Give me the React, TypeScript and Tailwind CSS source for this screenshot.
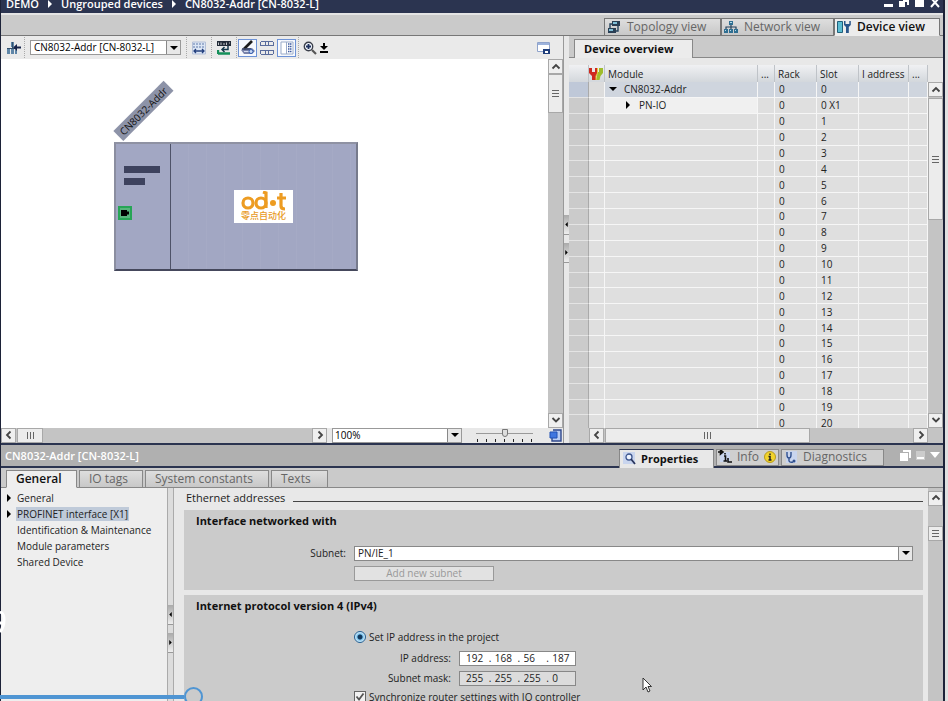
import React from "react";

const viewTabs = [
  { id: "topology", label: "Topology view", width: "w-[117px]", active: false },
  { id: "network", label: "Network view", width: "w-[113px]", active: false },
  { id: "device", label: "Device view", width: "w-[106px]", active: true },
];

const inspectorTabs = [
  { label: "General", width: "w-[71px]", active: true },
  { label: "IO tags", width: "w-[64px]", active: false },
  { label: "System constants", width: "w-[124px]", active: false },
  { label: "Texts", width: "w-[57px]", active: false },
];

const treeItems = [
  { label: "General", expandable: true, selected: false },
  { label: "PROFINET interface [X1]", expandable: true, selected: true },
  { label: "Identification & Maintenance", expandable: false, selected: false },
  { label: "Module parameters", expandable: false, selected: false },
  { label: "Shared Device", expandable: false, selected: false },
];

const modules = [
  { name: "CN8032-Addr", level: 0, rack: "0", slot: "0" },
  { name: "PN-IO", level: 1, rack: "0", slot: "0 X1" },
  ...Array.from({ length: 20 }, (_, i) => ({
    name: "",
    level: 2,
    rack: "0",
    slot: String(i + 1),
  })),
];

function Arrow({ dir, className = "" }: { dir: "up" | "down" | "left" | "right"; className?: string }) {
  const d = {
    up: "M1.5 6.5 5 3l3.5 3.5",
    down: "M1.5 3 5 6.5 8.5 3",
    left: "M6.5 1.5 3 5l3.5 3.5",
    right: "M3.5 1.5 7 5 3.5 8.5",
  }[dir];
  return (
    <svg viewBox="0 0 10 10" className={`h-[10px] w-[10px] ${className}`} fill="none" stroke="#444" strokeWidth="1.8">
      <path d={d} />
    </svg>
  );
}

function Triangle({ dir, className = "" }: { dir: "down" | "right" | "left"; className?: string }) {
  const d = { down: "M0 2h8L4 6z", right: "M2 0v8l4-4z", left: "M6 0v8L2 4z" }[dir];
  return (
    <svg viewBox="0 0 8 8" className={`h-2 w-2 shrink-0 ${className}`} fill="currentColor">
      <path d={d} />
    </svg>
  );
}

function ScrollButton({ dir }: { dir: "up" | "down" | "left" | "right" }) {
  return (
    <button
      aria-label={`Scroll ${dir}`}
      className="flex h-[15px] w-[15px] shrink-0 items-center justify-center border border-[#a8a8a8] bg-[#efefef]"
    >
      <Arrow dir={dir} />
    </button>
  );
}

function Grip({ vertical = false }: { vertical?: boolean }) {
  return (
    <svg viewBox="0 0 7 7" className="h-[7px] w-[7px]" stroke="#666" strokeWidth="1">
      <path d={vertical ? "M0 .5h7M0 3.5h7M0 6.5h7" : "M.5 0v7M3.5 0v7M6.5 0v7"} />
    </svg>
  );
}

function SplitHandle({ className = "" }: { className?: string }) {
  return (
    <div className={`flex flex-col gap-2 text-black ${className}`}>
      <button aria-label="Collapse left" className="flex h-5 w-full items-center justify-center border-b border-[#999] bg-linear-to-b from-[#aaa] to-[#eee]">
        <Triangle dir="left" className="h-[5px] w-[5px]" />
      </button>
      <button aria-label="Collapse right" className="flex h-5 w-full items-center justify-center border-b border-[#999] bg-linear-to-b from-[#aaa] to-[#eee]">
        <Triangle dir="right" className="h-[5px] w-[5px]" />
      </button>
    </div>
  );
}

function ViewIcon({ id }: { id: string }) {
  if (id === "topology") {
    return (
      <svg viewBox="0 0 14 14" className="h-[14px] w-[14px]">
        <path d="M5 1h8v5H5zM1 8h8v5H1z" fill="#2a3f55" />
        <path d="M6 2h4v2H6zM2 9h4v2H2z" fill="#7fc0d8" />
        <path d="M3 8V4h2M11 6v5H9" fill="none" stroke="#27445e" strokeWidth="1.4" />
      </svg>
    );
  }
  if (id === "network") {
    return (
      <svg viewBox="0 0 14 14" className="h-[14px] w-[14px]">
        <path d="M5 1h4v4H5zM0 9h4v4H0zM5 9h4v4H5zM10 9h4v4h-4z" fill="#2f6f92" />
        <path d="M7 5v4M2 9V7h10v2" fill="none" stroke="#27445e" strokeWidth="1.2" />
        <path d="M6 2h2v1H6zM1 10h1v1H1zM6 10h1v1H6zM11 10h1v1h-1z" fill="#b5dbea" />
      </svg>
    );
  }
  return (
    <svg viewBox="0 0 14 14" className="h-[14px] w-[14px]">
      <path d="M.5 1.500h5v11h-5z" fill="#5bbcd2" stroke="#1f5f7a" />
      <path d="M7 1v4l2 2V13h2.800V7l2-2V1h-1.500v3h-3.800V1z" fill="#29558a" />
    </svg>
  );
}

function TitleBar() {
  return (
    <header className="flex h-[13px] shrink-0 items-end justify-between overflow-hidden bg-[#2b3450] pl-[5px] text-white">
      <nav className="flex items-center gap-[7px] text-[11px] leading-[18px] font-semibold">
        <span>DEMO</span>
        <Triangle dir="right" />
        <span>Ungrouped devices</span>
        <Triangle dir="right" />
        <span>CN8032-Addr [CN-8032-L]</span>
      </nav>
      <div className="flex h-full items-start gap-[6px] pr-[3px]">
        <button aria-label="Minimize" className="mt-1 h-[3px] w-[9px] bg-white" />
        <button aria-label="Restore" className="h-[10px] w-[10px]">
          <svg viewBox="0 0 10 10" className="h-[10px] w-[10px]" fill="#fff"><path d="M4 0h6v5H8V2H4zM0 1h6v6H0z" /></svg>
        </button>
        <button aria-label="Maximize" className="h-[7px] w-[9px] bg-white" />
        <button aria-label="Close" className="h-[10px] w-[10px]">
          <svg viewBox="0 0 10 10" className="h-[10px] w-[10px]" stroke="#fff" strokeWidth="2"><path d="M1-2l8 9M9-2L1 7" /></svg>
        </button>
      </div>
    </header>
  );
}

function ViewTabs() {
  return (
    <div className="flex h-[23px] shrink-0 items-end justify-end border-t-2 border-[#e4e4e4] bg-[#cacaca] shadow-[inset_0_-1px_0_#777]">
      {viewTabs.map((tab) => (
        <button
          key={tab.id}
          className={`flex h-[18px] items-center gap-[6px] border border-[#777] pl-[2px] text-[12px] leading-4 ${tab.width} ${
            tab.active ? "border-b-[#ececec] bg-[#ececec] font-semibold text-[#111]" : "bg-linear-to-b from-[#dedede] to-[#c8c8c8] font-medium text-[#666]"
          }`}
        >
          <ViewIcon id={tab.id} />
          {tab.label}
        </button>
      ))}
      <span className="w-[3px]" />
    </div>
  );
}

function Separator() {
  return <span className="h-[21px] border-l border-dotted border-[#aaa]" />;
}

function Toolbar() {
  return (
    <div className="flex h-[23px] shrink-0 items-center bg-[#eaeaea] pl-[5px]">
      <button aria-label="Go to network" className="mr-[2px] h-4 w-4">
        <svg viewBox="0 0 16 16" className="h-4 w-4">
          <path d="M5 2h3v5H5zM1 8h3v6H1zM5 8h3v6H5zM9 10h2v4H9z" fill="#5f86a8" />
          <path d="M6.500 2v6M1 8.500h9" stroke="#31506e" />
          <path d="M7 7.500L11 4v2.500h4v2h-4V11z" fill="#16244a" />
        </svg>
      </button>
      <Separator />
      <div className="mx-[5px] flex h-[15px] w-[151px] border border-[#999] bg-white">
        <select aria-label="Device" className="min-w-0 flex-1 appearance-none pl-[3px] text-[10px] leading-[13px]">
          <option>CN8032-Addr [CN-8032-L]</option>
        </select>
        <span className="flex w-[14px] items-center justify-center border-l border-[#888] bg-[#e8e8e8] text-black">
          <Triangle dir="down" />
        </span>
      </div>
      <Separator />
      <button aria-label="Show addresses" className="mx-[5px] h-[14px] w-[14px]">
        <svg viewBox="0 0 14 14" className="h-[14px] w-[14px]">
          <path d="M.5 1h13v12H.5z" fill="#dce6f5" stroke="#b4c0d8" />
          <path d="M1 3h12M1 6h12" stroke="#5f78a8" strokeDasharray="2 1" />
          <path d="M2 10h10M4 8l-2 2 2 2M10 8l2 2-2 2" fill="none" stroke="#24407e" strokeWidth="1.3" />
        </svg>
      </button>
      <Separator />
      <button aria-label="Assign name" className="mx-[5px] h-[14px] w-[14px]">
        <svg viewBox="0 0 14 14" className="h-[14px] w-[14px]">
          <path d="M0 0h14v5H0z" fill="#222b38" />
          <path d="M1.500 4V1.500M4 4V1.500M6 3h2M9.500 4V1.500M12 2h1" stroke="#eee" strokeWidth=".8" />
          <path d="M1 13V9M1 12.500h12" stroke="#14905a" strokeWidth="2.400" />
          <path d="M11 5v3.500H5M7.500 6L5 8.500 7.500 11" fill="none" stroke="#173a4d" strokeWidth="1.500" />
        </svg>
      </button>
      <Separator />
      <button aria-label="Show labels" className="ml-px flex h-[18px] w-[19px] items-center justify-center border border-[#6d92d6] bg-[#f6f8fd]">
        <svg viewBox="0 0 16 16" className="h-4 w-4">
          <path d="M1 10l3-2h8l3 3-3 3H4z" fill="#7983aa" />
          <path d="M4 9l8-8" stroke="#1c1c1c" strokeWidth="2.600" />
          <path d="M2 9h9" stroke="#3b4668" strokeWidth="1.600" />
          <path d="M4 11.500h5" stroke="#d5dcef" />
          <circle cx="11" cy="11.500" r="2" fill="#c9d8f2" stroke="#345db0" />
        </svg>
      </button>
      <button aria-label="Show page breaks" className="mx-[3px] h-[14px] w-[14px]">
        <svg viewBox="0 0 14 14" className="h-[14px] w-[14px]" fill="none" stroke="#5a6c9c">
          <path d="M1 .5h12M1 4.500h12M1 9.500h12M1 13.500h12M5.500 1v4M8.500 1v4M5.500 9v4M8.500 9v4M.5 1v4M13.500 1v4M.5 9v4M13.500 9v4" />
        </svg>
      </button>
      <button aria-label="Show overview" className="flex h-[18px] w-[19px] items-center justify-center border border-[#6d92d6] bg-[#f6f8fd]">
        <svg viewBox="0 0 14 14" className="h-[14px] w-[14px]">
          <path d="M1 1h12v12H1z" fill="#fff" stroke="#9aabc8" />
          <path d="M6.500 1v12" stroke="#9aabc8" />
          <path d="M8 3h4M8 5.500h4M8 8h4M8 10.500h4" stroke="#3d5aa0" strokeWidth="1.300" strokeDasharray="1.500 .5" />
        </svg>
      </button>
      <span className="w-[2px]" />
      <Separator />
      <button aria-label="Zoom" className="ml-1 flex items-center gap-[3px]">
        <svg viewBox="0 0 14 14" className="h-[14px] w-[14px]" fill="none">
          <circle cx="5.500" cy="5.500" r="4.200" fill="#f4f8ff" stroke="#3b3f4a" strokeWidth="1.400" />
          <path d="M3 5.500h5M5.500 3v5" stroke="#20325e" strokeWidth="1.800" />
          <path d="M9 9l4 4" stroke="#555" strokeWidth="2.200" />
        </svg>
        <svg viewBox="0 0 8 10" className="h-[10px] w-2"><path d="M3 0h2v3h3L4 7 0 3h3zM0 8h8v2H0z" /></svg>
      </button>
      <button aria-label="Save layout" className="mr-[12px] ml-auto h-[14px] w-[14px]">
        <svg viewBox="0 0 14 14" className="h-[14px] w-[14px]">
          <path d="M.5 1.500h12v9H.5z" fill="#fff" stroke="#8fa3cb" />
          <path d="M1 2h11v2H1z" fill="#9db3dc" />
          <path d="M6 8h7v5H6z" fill="#1f3e7b" />
          <path d="M8 10h3v2H8z" fill="#fff" />
        </svg>
      </button>
    </div>
  );
}

function DeviceCanvas() {
  return (
    <div className="relative min-w-0 flex-1 overflow-hidden bg-white">
      <span className="absolute top-[45px] left-[107px] -rotate-45 bg-[#8d93a8] px-1 text-[10px] leading-[14px] text-[#111]">
        CN8032-Addr
      </span>
      <div className="absolute top-[83px] left-[113px] flex h-[129px] w-[244px] border-2 border-t-[#8f92a3] border-r-[#777b8c] border-b-[#45485c] border-l-[#8b8ea0] bg-[#a2a7c3]">
        <div className="flex w-[55px] flex-col items-start border-r border-[#4e5268] pt-[22px] pl-2">
          <span className="h-[7px] w-9 bg-[#3d425e]" />
          <span className="mt-[5px] h-[7px] w-[21px] bg-[#3d425e]" />
          <span className="mt-[21px] -ml-[6px] flex h-[14px] w-[14px] items-center justify-center border-2 border-[#27a556] bg-[#58b47c]">
            <svg viewBox="0 0 10 8" className="h-2 w-[10px]"><path d="M1 1h6v1.500h2v3H7V7H1z" /></svg>
          </span>
        </div>
        <div className="flex flex-1 items-center justify-center bg-[repeating-linear-gradient(90deg,#a2a7c3_0,#a2a7c3_17px,#a9adc7_18px)]">
          <div className="flex h-[33px] w-[59px] flex-col items-center bg-white text-[#e89a25]">
            <svg viewBox="0 0 46 20" className="mt-px h-5 w-[46px]" fill="none" stroke="#ed9c22" strokeWidth="3.200">
              <circle cx="7" cy="12" r="5" />
              <circle cx="20" cy="12" r="5" />
              <path d="M25 17V2l-3-1" />
              <circle cx="32" cy="12" r="3" fill="#ed9c22" stroke="none" />
              <path d="M40 2v13q0 3 4 3M36 7h9" />
            </svg>
            <span className="font-['Noto_Sans_CJK_SC',sans-serif] text-[9px] leading-[10px] font-medium">零点自动化</span>
          </div>
        </div>
      </div>
    </div>
  );
}

function EditorFooter() {
  return (
    <div className="flex h-[15px] shrink-0 bg-[#e8e8e8]">
      <div className="flex w-[326px] bg-[#c4c4c4]">
        <ScrollButton dir="left" />
        <span className="ml-px flex w-[26px] items-center justify-center border border-[#a8a8a8] bg-[#ececec]"><Grip /></span>
        <span className="flex-1" />
        <ScrollButton dir="right" />
      </div>
      <div className="ml-[5px] flex w-[130px] border border-[#999] bg-white">
        <select aria-label="Zoom factor" className="min-w-0 flex-1 appearance-none pl-[2px] text-[10px] leading-[13px]">
          <option>100%</option>
        </select>
        <span className="flex w-[14px] items-center justify-center border-l border-[#888] bg-[#e8e8e8] text-black">
          <Triangle dir="down" />
        </span>
      </div>
      <div className="ml-[14px] flex w-[57px] flex-col">
        <input
          type="range"
          aria-label="Zoom"
          defaultValue={50}
          className="h-[11px] w-full appearance-none bg-[linear-gradient(#999,#999)] bg-[length:100%_1px] bg-center bg-no-repeat [&::-webkit-slider-thumb]:h-[8px] [&::-webkit-slider-thumb]:w-[6px] [&::-webkit-slider-thumb]:appearance-none [&::-webkit-slider-thumb]:rounded-b-full [&::-webkit-slider-thumb]:border [&::-webkit-slider-thumb]:border-[#777] [&::-webkit-slider-thumb]:bg-[#ddd]"
        />
        <svg viewBox="0 0 57 3" className="h-[3px] w-full" stroke="#222">
          <path d="M1.500 0v3M10.500 0v3M19.500 0v3M28.500 0v3M37.500 0v3M46.500 0v3M55.500 0v3" />
        </svg>
      </div>
      <button aria-label="Overview navigation" className="mr-px ml-auto">
        <svg viewBox="0 0 13 13" className="h-[13px] w-[13px]">
          <path d="M4 1h8v11H3V9" fill="#b9ccf2" stroke="#30488c" strokeWidth="1.400" />
          <path d="M1 3h7v6H1z" fill="#3f76e0" stroke="#2050b4" />
        </svg>
      </button>
    </div>
  );
}

function DeviceOverview() {
  const head = "border-r border-[#bfc3c8] pl-[3px] text-left font-normal";
  const cell = "border-r border-b border-[#f6f6f6] p-0 pl-1";
  return (
    <section className="flex min-w-0 flex-1 flex-col bg-[#e8e8e8]">
      <div className="flex h-[22px] shrink-0 items-end border-b border-[#888] bg-[#cacaca] pl-[5px]">
        <h2 className="-mb-px h-[19px] w-[119px] border border-b-0 border-[#888] bg-[#ececec] pl-[9px] text-[11px] leading-[17px] font-bold text-[#111]">
          Device overview
        </h2>
      </div>
      <div className="mt-[7px] flex min-h-0 flex-1">
        <div className="flex min-w-0 flex-1 flex-col">
          <div className="min-h-0 flex-1 overflow-hidden">
            <table className="h-[101%] w-full table-fixed border-separate border-spacing-0 text-[10px] leading-[12px] text-[#222]">
              <colgroup>
                <col className="w-[20px]" />
                <col className="w-[16px]" />
                <col />
                <col className="w-[17px]" />
                <col className="w-[42px]" />
                <col className="w-[42px]" />
                <col className="w-[50px]" />
                <col className="w-[19px]" />
              </colgroup>
              <thead>
                <tr className="h-[17px] bg-linear-to-b from-[#f0f1f3] to-[#d3d7dc]">
                  <th className={head} />
                  <th className={head}>
                    <svg viewBox="0 0 14 14" className="-ml-[3px] h-[14px] w-[14px]">
                      <path d="M0 1v5l3 3v4h4V9l2-3V1H6v4H3V1z" fill="#cf2a20" />
                      <path d="M10 1v4H8.500l-.5 4-1 4h3.500l1-4L14 6V1z" fill="#9fbd2c" />
                      <path d="M8.500 1v5L7 9v4" fill="none" stroke="#e7c93a" />
                    </svg>
                  </th>
                  <th className={head}>Module</th>
                  <th className={head}>...</th>
                  <th className={head}>Rack</th>
                  <th className={head}>Slot</th>
                  <th className={`${head} whitespace-nowrap`}>I address</th>
                  <th className={head}>...</th>
                </tr>
              </thead>
              <tbody>
                {modules.map((row, i) => (
                  <tr key={i} className={i === 0 ? "bg-[#cfd5de]" : "bg-[#dfdfdf]"}>
                    <td className={`border-r border-b border-r-[#aaa] border-b-[#e4e4e4] p-0 ${i === 0 ? "bg-[#bfc8d8]" : "bg-[#cbcbcb]"}`} />
                    <td className={`${cell} ${i === 0 ? "bg-[#dcdcdc]" : ""}`} />
                    <td className={`${cell} ${i === 1 ? "bg-[#f0f0f0]" : ""}`}>
                      {row.name && (
                        <span className={`flex items-center gap-[7px] ${row.level === 0 ? "" : "pl-[15px]"}`}>
                          <Triangle dir={row.level === 0 ? "down" : "right"} className="text-black" />
                          {row.name}
                        </span>
                      )}
                    </td>
                    <td className={cell} />
                    <td className={cell}>{row.rack}</td>
                    <td className={cell}>{row.slot}</td>
                    <td className={cell} />
                    <td className={cell} />
                  </tr>
                ))}
              </tbody>
            </table>
          </div>
          <div className="flex h-[15px] shrink-0 bg-[#c4c4c4]">
            <span className="w-[20px] bg-[#cbcbcb]" />
            <ScrollButton dir="left" />
            <span className="ml-px flex w-[205px] items-center justify-center border border-[#a8a8a8] bg-[#ececec]"><Grip /></span>
            <span className="flex-1" />
            <ScrollButton dir="right" />
          </div>
        </div>
        <div className="mt-[17px] flex w-[15px] flex-col bg-[#c4c4c4]">
          <ScrollButton dir="up" />
          <span className="mt-px flex h-[122px] items-center justify-center border border-[#a8a8a8] bg-[#ececec]"><Grip vertical /></span>
          <span className="flex-1" />
          <ScrollButton dir="down" />
          <span className="h-[15px]" />
        </div>
      </div>
    </section>
  );
}

function InspectorHeader() {
  const tab = "flex items-center gap-[5px] border border-[#888] pl-[3px] leading-4";
  return (
    <div className="flex h-[23px] shrink-0 items-end border-b-2 border-[#2b3450] bg-[#b0b0b0]">
      <h2 className="self-start pl-1 text-[11px] leading-[21px] font-semibold text-white">CN8032-Addr [CN-8032-L]</h2>
      <div className="-mb-[2px] ml-auto flex items-start gap-[2px]">
        <button className={`${tab} h-[19px] w-[95px] border-b-0 border-t-[#2b3450] bg-[#e8e8e8] text-[11px] font-bold text-[#111]`}>
          <svg viewBox="0 0 13 13" className="h-[13px] w-[13px]" fill="none">
            <path d="M0 0h12v12H0z" fill="#c9d5ee" />
            <circle cx="6" cy="5" r="3" fill="#eef4ff" stroke="#3c558e" strokeWidth="1.300" />
            <path d="M8 7l4 5" stroke="#29355c" strokeWidth="1.800" />
          </svg>
          Properties
        </button>
        <button className={`${tab} h-[17px] w-[63px] bg-[#cfcfcf] text-[12px] font-medium text-[#666]`}>
          <svg viewBox="0 0 14 14" className="-ml-[2px] h-[14px] w-[14px]">
            <path d="M2 2h10v10H2z" fill="#c9d5ee" />
            <path d="M0 2h4M2.500 0l2.500 2-2.500 2zM7 3v1.500M6 6h1.500v5M5.500 11H9M10 8v4h4" fill="none" stroke="#111" strokeWidth="1.600" />
          </svg>
          Info
          <svg viewBox="0 0 12 12" className="h-3 w-3">
            <circle cx="6" cy="6" r="5.500" fill="#f2d32c" stroke="#b69a20" />
            <path d="M6 2.500v1.500M4.500 5.500H6v3.500M4.500 9h3" fill="none" stroke="#222" strokeWidth="1.500" />
          </svg>
        </button>
        <button className={`${tab} h-[17px] w-[103px] bg-[#cfcfcf] text-[12px] font-medium text-[#666]`}>
          <svg viewBox="0 0 13 13" className="h-[13px] w-[13px]" fill="none">
            <path d="M1 0h11v12H1z" fill="#c9d5ee" />
            <path d="M2 1v3q0 3 2 3t2-3V1M4 7v3q1 2 4 1" stroke="#31508e" strokeWidth="1.400" />
            <circle cx="9" cy="10" r="1.500" fill="#31508e" />
          </svg>
          Diagnostics
        </button>
      </div>
      <div className="mb-[5px] ml-4 flex items-center gap-[5px] pr-[3px]">
        <button aria-label="Float">
          <svg viewBox="0 0 11 11" className="h-[11px] w-[11px]" fill="#fff"><path d="M3 0h8v8H9V2H3zM0 3h8v8H0z" /></svg>
        </button>
        <button aria-label="Collapse">
          <svg viewBox="0 0 9 9" className="h-[9px] w-[9px]"><path d="M0 0h9v9H0z" fill="#ccc" /><path d="M1 7h7" stroke="#fff" strokeWidth="2" /></svg>
        </button>
        <button aria-label="Hide">
          <svg viewBox="0 0 10 6" className="h-[6px] w-[10px]" fill="#fff"><path d="M0 0h10L5 6z" /></svg>
        </button>
      </div>
    </div>
  );
}

function IpField({ id, parts, disabled = false }: { id: string; parts: string[]; disabled?: boolean }) {
  return (
    <div className={`flex h-[15px] w-[117px] items-center border border-[#888] pl-[6px] ${disabled ? "bg-[#dcdcdc]" : "bg-white"}`}>
      {parts.map((part, i) => (
        <React.Fragment key={i}>
          {i > 0 && <span className="w-[6px]">.</span>}
          <input id={i === 0 ? id : undefined} aria-label={i === 0 ? undefined : `Octet ${i + 1}`} defaultValue={part} readOnly={disabled} className="h-[13px] w-[23px] min-w-0" />
        </React.Fragment>
      ))}
    </div>
  );
}

function Properties() {
  return (
    <div className="min-w-0 flex-1 overflow-hidden bg-[#e8e8e8] pr-[5px] pl-[10px] text-[10px] text-[#222]">
      <div className="flex h-[22px] items-center gap-2 pb-[2px] pl-[2px]">
        <h3 className="text-[11px] leading-4">Ethernet addresses</h3>
        <span className="mt-2 h-px flex-1 bg-[#444]" />
      </div>
      <section className="h-[80px] bg-[#cbcbcb] px-[10px] pt-[3px]">
        <h4 className="ml-[2px] text-[11px] leading-4 font-bold text-[#111]">Interface networked with</h4>
        <div className="mt-[17px] flex items-center">
          <label htmlFor="subnet" className="w-[152px] text-right">Subnet:</label>
          <div className="ml-2 flex h-[15px] flex-1 border border-[#888] bg-white">
            <select id="subnet" className="min-w-0 flex-1 appearance-none pl-[3px] leading-[13px]">
              <option>PN/IE_1</option>
            </select>
            <span className="flex w-[14px] items-center justify-center border-l border-[#888] bg-[#e8e8e8] text-black">
              <Triangle dir="down" />
            </span>
          </div>
        </div>
        <button disabled className="mt-[5px] ml-[160px] block h-[15px] w-[140px] border border-[#999] bg-[#e2e2e2] leading-[13px] text-[#999]">
          Add new subnet
        </button>
      </section>
      <section className="mt-[5px] h-[180px] bg-[#cbcbcb] px-[10px] pt-[3px]">
        <h4 className="ml-[2px] text-[11px] leading-4 font-bold text-[#111]">Internet protocol version 4 (IPv4)</h4>
        <label className="mt-[17px] ml-[160px] flex h-[13px] items-center gap-[3px]">
          <input
            type="radio"
            defaultChecked
            className="h-3 w-3 appearance-none rounded-full border border-[#235f92] bg-[radial-gradient(circle,#12385c_0_2px,#7cc4ef_3px,#d9effb_5px)]"
          />
          Set IP address in the project
        </label>
        <div className="mt-[7px] flex items-center gap-2">
          <label htmlFor="ip" className="w-[257px] text-right">IP address:</label>
          <IpField id="ip" parts={["192", "168", "56", "187"]} />
        </div>
        <div className="mt-[5px] flex items-center gap-2">
          <label htmlFor="mask" className="w-[257px] text-right">Subnet mask:</label>
          <IpField id="mask" parts={["255", "255", "255", "0"]} disabled />
        </div>
        <label className="mt-1 ml-[160px] flex items-center gap-[3px]">
          <input
            type="checkbox"
            defaultChecked
            className="h-3 w-3 appearance-none border border-[#666] bg-[#f2f2f2]"
          />
          <svg viewBox="0 0 12 12" className="-ml-[15px] h-3 w-3" fill="none" stroke="#555" strokeWidth="1.800"><path d="M2.500 5.500L5 8.500l4.500-6" /></svg>
          Synchronize router settings with IO controller
        </label>
      </section>
    </div>
  );
}

function Inspector() {
  return (
    <section className="flex min-h-0 flex-[257_1_0%] flex-col">
      <InspectorHeader />
      <div className="flex h-[20px] shrink-0 items-end gap-[2px] border-b border-[#888] bg-[#cacaca] pl-[5px]">
        {inspectorTabs.map((tab) => (
          <button
            key={tab.label}
            className={`-mb-px h-[18px] border border-[#888] pl-[9px] text-left text-[12px] leading-4 ${tab.width} ${
              tab.active ? "border-b-[#eee] bg-[#eee] font-semibold text-[#111]" : "bg-linear-to-b from-[#dedede] to-[#c8c8c8] font-medium text-[#666]"
            }`}
          >
            {tab.label}
          </button>
        ))}
      </div>
      <div className="flex min-h-0 flex-1">
        <ul className="w-[166px] shrink-0 bg-[#eee] pt-[2px] text-[10px] leading-4 text-[#222]">
          {treeItems.map((item) => (
            <li key={item.label} className="flex h-4 items-center pl-1">
              <span className="w-[11px]">{item.expandable && <Triangle dir="right" className="text-black" />}</span>
              <a href="#" className={`px-px leading-[14px] whitespace-nowrap ${item.selected ? "bg-[#bfcad9]" : ""}`}>{item.label}</a>
            </li>
          ))}
        </ul>
        <div className="w-[7px] shrink-0 border-x border-[#aaa] bg-[#dcdcdc] pt-[117px]">
          <SplitHandle />
        </div>
        <Properties />
        <div className="flex w-[15px] shrink-0 flex-col bg-[#c4c4c4] pt-[3px]">
          <ScrollButton dir="up" />
          <span className="mt-5 flex h-[15px] items-center justify-center border border-[#a8a8a8] bg-[#ececec]"><Grip vertical /></span>
        </div>
      </div>
    </section>
  );
}

export default function App() {
  return (
    <div className="relative flex h-screen overflow-hidden bg-[#e0e0e0] font-['Open_Sans',sans-serif]">
      <main className="flex min-w-0 flex-1 flex-col border-r-2 border-l border-[#1c2238]">
        <div className="flex min-h-0 flex-[444_1_0%] flex-col border-b-2 border-[#2b3450]">
          <TitleBar />
          <ViewTabs />
          <div className="flex min-h-0 flex-1">
            <section className="flex w-[562px] shrink-0 flex-col">
              <Toolbar />
              <div className="flex min-h-0 flex-1">
                <DeviceCanvas />
                <div className="flex w-[15px] shrink-0 flex-col bg-[#c4c4c4]">
                  <ScrollButton dir="up" />
                  <span className="flex h-[39px] items-center justify-center border border-[#a8a8a8] bg-[#ececec]"><Grip vertical /></span>
                  <span className="flex-1" />
                  <ScrollButton dir="down" />
                </div>
              </div>
              <EditorFooter />
            </section>
            <div className="w-[6px] shrink-0 border-l border-[#999] bg-[#e8e8e8] pt-[179px]">
              <SplitHandle />
            </div>
            <DeviceOverview />
          </div>
        </div>
        <Inspector />
      </main>
      <div className="w-[3px] shrink-0" />

      {/* video player overlay */}
      <svg viewBox="0 0 6 22" className="absolute bottom-[68px] left-0 h-[22px] w-[6px]" fill="none" stroke="#fff" strokeWidth="3">
        <path d="M0 1q4 1 4 8t-4 12M0 12h4" />
      </svg>
      <div className="absolute bottom-0 left-0 flex h-[14px] items-start overflow-hidden">
        <span className="mt-2 h-1 w-[184px] bg-[#4f95d3]" />
        <span className="h-[19px] w-[19px] shrink-0 rounded-full border-2 border-[#4f95d3]" />
      </div>
      <svg viewBox="0 0 10 16" className="absolute bottom-2 left-[642px] h-4 w-[10px]" fill="#fff" stroke="#222" strokeWidth=".9">
        <path d="M1 1v12l3-3 2 5 2-1-2-4.500h3.500z" />
      </svg>
    </div>
  );
}
